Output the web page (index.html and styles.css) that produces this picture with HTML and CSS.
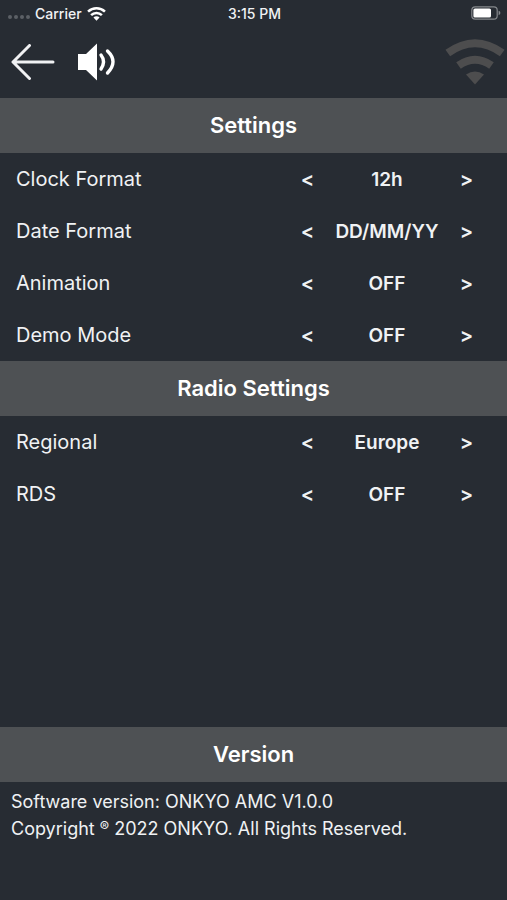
FILE: index.html
```
<!DOCTYPE html>
<html lang="en">
<head>
<meta charset="utf-8">
<meta name="viewport" content="width=device-width, initial-scale=1">
<title>Settings</title>
<link rel="stylesheet" href="styles.css">
</head>
<body>
<div class="screen">
  <div class="status">
    <div class="carrier">
      <span class="dots"><i></i><i></i><i></i><i></i></span>
      <span>Carrier</span>
      <svg class="status-wifi" viewBox="0 0 18 14" aria-hidden="true">
        <g fill="none" stroke="currentColor" stroke-width="2.4">
          <path d="M1 5.200a11.600 11.600 0 0 1 16 0"/>
          <path d="M3.900 8.600a7.200 7.200 0 0 1 10.200 0"/>
        </g>
        <path d="M9 13.800 6.100 10.900a4.100 4.100 0 0 1 5.800 0z" fill="currentColor"/>
      </svg>
    </div>
    <time class="clock">3:15 PM</time>
    <svg class="battery" viewBox="0 0 30 14" aria-label="Battery">
      <rect x="0.8" y="0.8" width="25.4" height="12.4" rx="3.4" fill="none" stroke="#85888c" stroke-width="1.2"/>
      <rect x="2.4" y="2.4" width="17.6" height="9.2" rx="1.6" fill="#fff"/>
      <path d="M27.6 4.8q1.8.6 1.8 2.2t-1.8 2.2z" fill="#85888c"/>
    </svg>
  </div>
  <header class="toolbar">
    <button class="icon-button" type="button" aria-label="Back">
      <svg class="back" viewBox="0 0 44 36" aria-hidden="true">
        <path d="M18.500 1.500 2 18l16.500 16.500M3 18h39" fill="none" stroke="#f0f1f3" stroke-width="3" stroke-linecap="round" stroke-linejoin="round"/>
      </svg>
    </button>
    <button class="icon-button" type="button" aria-label="Volume">
      <svg class="speaker" viewBox="0 0 38 38" aria-hidden="true">
        <path d="M0 11h8L19 .5v37L8 27H0z" fill="#fff"/>
        <g fill="none" stroke="#fff" stroke-width="3.4" stroke-linecap="round">
          <path d="M23 12q5 6.500 0 14"/>
          <path d="M29.500 8q11 10.500 0 22"/>
        </g>
      </svg>
    </button>
    <svg class="signal" viewBox="0 0 60 46" aria-label="Wi-Fi signal">
      <g fill="none" stroke="#4d4d4e" stroke-width="8">
        <path d="M2.800 14Q30-5.500 57.200 14"/>
        <path d="M13.500 26.500Q30 15 46.500 26.500"/>
      </g>
      <path d="M30 45.500 21 35.500q9-6 18 0z" fill="#4d4d4e"/>
    </svg>
  </header>
  <main class="content">
    <section>
      <h2 class="heading">Settings</h2>
      <div class="row"><span class="label" id="clock">Clock Format</span><div class="picker" role="group" aria-labelledby="clock"><button class="step" type="button">&lt;</button><output class="value">12h</output><button class="step" type="button">&gt;</button></div></div>
      <div class="row"><span class="label" id="date">Date Format</span><div class="picker" role="group" aria-labelledby="date"><button class="step" type="button">&lt;</button><output class="value">DD/MM/YY</output><button class="step" type="button">&gt;</button></div></div>
      <div class="row"><span class="label" id="animation">Animation</span><div class="picker" role="group" aria-labelledby="animation"><button class="step" type="button">&lt;</button><output class="value">OFF</output><button class="step" type="button">&gt;</button></div></div>
      <div class="row"><span class="label" id="demo">Demo Mode</span><div class="picker" role="group" aria-labelledby="demo"><button class="step" type="button">&lt;</button><output class="value">OFF</output><button class="step" type="button">&gt;</button></div></div>
    </section>
    <section>
      <h2 class="heading">Radio Settings</h2>
      <div class="row"><span class="label" id="regional">Regional</span><div class="picker" role="group" aria-labelledby="regional"><button class="step" type="button">&lt;</button><output class="value">Europe</output><button class="step" type="button">&gt;</button></div></div>
      <div class="row"><span class="label" id="rds">RDS</span><div class="picker" role="group" aria-labelledby="rds"><button class="step" type="button">&lt;</button><output class="value">OFF</output><button class="step" type="button">&gt;</button></div></div>
    </section>
  </main>
  <footer class="version">
    <h2 class="heading">Version</h2>
    <p class="about">Software version: ONKYO AMC V1.0.0<br>Copyright <span class="mark">®</span> 2022 ONKYO. All Rights Reserved.</p>
  </footer>
</div>
</body>
</html>
```
FILE: styles.css
```
* {
  box-sizing: border-box;
}

body {
  margin: 0;
  background: #272c33;
  color: #f0f2f4;
  font-family: Inter, "Liberation Sans", sans-serif;
  font-size: 20px;
}

.screen {
  display: flex;
  flex-direction: column;
  min-height: 100vh;
}

.status {
  display: grid;
  grid-template-columns: 1fr auto 1fr;
  align-items: center;
  height: 26px;
  padding: 0 6px 0 8px;
  font-size: 14px;
  font-weight: 500;
}

.carrier {
  display: flex;
  align-items: center;
  gap: 5px;
}

.dots {
  display: flex;
  gap: 2px;
  padding-top: 8px;
}

.dots i {
  width: 4px;
  height: 4px;
  border-radius: 50%;
  background: #5b6066;
}

.status-wifi {
  width: 19px;
  height: 15px;
  color: #fff;
}

.battery {
  justify-self: end;
  width: 30px;
  height: 14px;
}

.toolbar {
  display: flex;
  align-items: center;
  gap: 23px;
  height: 72px;
  padding: 0 2px 0 11px;
}

button {
  padding: 0;
  border: 0;
  background: none;
  color: inherit;
  font: inherit;
  cursor: pointer;
}

.icon-button,
.icon-button svg {
  display: block;
}

.back {
  width: 44px;
  height: 36px;
}

.speaker {
  width: 38px;
  height: 38px;
}

.signal {
  width: 60px;
  height: 46px;
  margin-left: auto;
  overflow: visible;
}

.content {
  flex: 1;
}

.heading {
  margin: 0;
  background: #4e5154;
  color: #fff;
  font-size: 22px;
  font-weight: 600;
  line-height: 55px;
  text-align: center;
}

.row {
  display: flex;
  align-items: center;
  justify-content: space-between;
  height: 52px;
  padding: 0 14px 0 16px;
}

.picker {
  display: grid;
  grid-template-columns: 53px 106px 53px;
  align-items: center;
  font-weight: 600;
  text-align: center;
}

.step {
  height: 52px;
}

.value {
  font-size: 19px;
  white-space: nowrap;
}

.about {
  margin: 0;
  padding: 6px 11px 58px;
  font-size: 18px;
  line-height: 27px;
}

.mark {
  font-size: 14px;
  line-height: 1;
  vertical-align: 3px;
}
```
